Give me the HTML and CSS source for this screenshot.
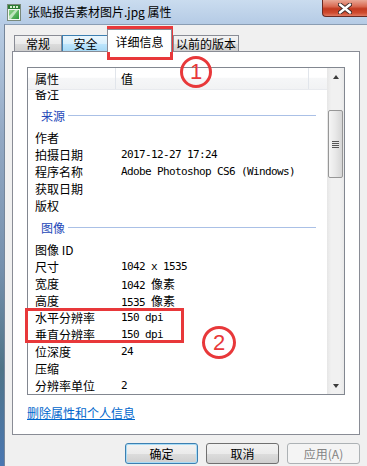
FILE: index.html
```html
<!DOCTYPE html>
<html lang="zh-CN">
<head>
  <meta charset="UTF-8">
  <title>张贴报告素材图片.jpg 属性</title>
  <link rel="stylesheet" href="styles.css">
</head>
<body>
  <div class="window">
    <header class="titlebar">
      <svg class="title-icon" width="14" height="17" viewBox="0 0 14 17">
        <defs>
          <linearGradient id="pic" x1="0" y1="0" x2="1" y2="1">
            <stop offset="0" stop-color="#8fd48a"/>
            <stop offset="1" stop-color="#2f9a3c"/>
          </linearGradient>
        </defs>
        <rect x="0.5" y="0.5" width="13" height="16" fill="#f4f8f4" stroke="#7a8a7c"/>
        <rect x="1" y="1" width="12" height="4" fill="#2d7d35"/>
        <rect x="3" y="2" width="2" height="2" fill="#d8f0d0"/>
        <rect x="6" y="2" width="2" height="2" fill="#d8f0d0"/>
        <rect x="9" y="2" width="2" height="2" fill="#d8f0d0"/>
        <rect x="2" y="6" width="10" height="9" fill="url(#pic)"/>
        <path d="M2 12 L8 6 L11 6 L4 15 L2 15 Z" fill="#e6f6e2" opacity="0.7"/>
      </svg>
      <span class="title">张贴报告素材图片.jpg 属性</span>
      <div class="close-btn">
        <svg width="14" height="11" viewBox="0 0 14 11">
          <path d="M2 1.5 L12 9.5 M12 1.5 L2 9.5" stroke="#3b2a28" stroke-width="4.2" stroke-linecap="round"/>
          <path d="M2 1.5 L12 9.5 M12 1.5 L2 9.5" stroke="#ffffff" stroke-width="2.4" stroke-linecap="round"/>
        </svg>
      </div>
    </header>

    <div class="frame-body">
      <div class="frame-left"></div>
      <div class="client">
        <nav class="tabs">
          <div class="tab tab-general">常规</div>
          <div class="tab tab-security hot">安全</div>
          <div class="tab tab-details active">详细信息</div>
          <div class="tab tab-versions">以前的版本</div>
        </nav>

        <section class="panel">
          <div class="list">
            <div class="list-main">
              <div class="list-head">
                <div class="head-cell col-name">属性</div>
                <div class="head-cell col-value">值</div>
                <div class="head-cell col-rest"></div>
              </div>
              <div class="list-body">
                <div class="rows">
                  <div class="row"><span class="name">备注</span><span class="value"></span></div>
                  <div class="group">来源</div>
                  <div class="row"><span class="name">作者</span><span class="value"></span></div>
                  <div class="row"><span class="name">拍摄日期</span><span class="value">2017-12-27 17:24</span></div>
                  <div class="row"><span class="name">程序名称</span><span class="value">Adobe Photoshop CS6 (Windows)</span></div>
                  <div class="row"><span class="name">获取日期</span><span class="value"></span></div>
                  <div class="row"><span class="name">版权</span><span class="value"></span></div>
                  <div class="group">图像</div>
                  <div class="row"><span class="name">图像 ID</span><span class="value"></span></div>
                  <div class="row"><span class="name">尺寸</span><span class="value">1042 x 1535</span></div>
                  <div class="row"><span class="name">宽度</span><span class="value">1042 <span class="unit">像素</span></span></div>
                  <div class="row"><span class="name">高度</span><span class="value">1535 <span class="unit">像素</span></span></div>
                  <div class="row"><span class="name">水平分辨率</span><span class="value">150 dpi</span></div>
                  <div class="row"><span class="name">垂直分辨率</span><span class="value">150 dpi</span></div>
                  <div class="row"><span class="name">位深度</span><span class="value">24</span></div>
                  <div class="row"><span class="name">压缩</span><span class="value"></span></div>
                  <div class="row"><span class="name">分辨率单位</span><span class="value">2</span></div>
                </div>
              </div>
            </div>
            <div class="scrollbar">
              <div class="sb-btn"><span class="arrow-up"></span></div>
              <div class="sb-track">
                <div class="sb-thumb">
                  <span class="grip"></span>
                </div>
              </div>
              <div class="sb-btn"><span class="arrow-down"></span></div>
            </div>
          </div>
          <a class="remove-link" href="#">删除属性和个人信息</a>
        </section>

        <div class="buttons">
          <button class="btn default">确定</button>
          <button class="btn">取消</button>
          <button class="btn" disabled>应用(A)</button>
        </div>
      </div>
    </div>

    <!-- annotations drawn over the dialog -->
    <div class="mark-box box-tab"></div>
    <div class="mark-circle circle-1">1</div>
    <div class="mark-box box-dpi"></div>
    <div class="mark-circle circle-2">2</div>
  </div>
</body>
</html>
```

FILE: styles.css
```css
body, html {
  margin: 0;
  padding: 0;
  font-family: "Noto Sans CJK SC", sans-serif;
  font-size: 12px;
  color: #000;
  background: #f0f0f0;
}
.window {
  position: relative;
  width: 367px;
  height: 466px;
  overflow: hidden;
  display: flex;
  flex-direction: column;
}

/* title bar */
.titlebar {
  height: 24px;
  flex: none;
  display: flex;
  align-items: center;
  background: linear-gradient(#cadcef, #b5cbe5);
}
.title-icon {
  margin-left: 7px;
  flex: none;
}
.title {
  margin-left: 7px;
  flex: 1;
  line-height: 16px;
  color: #000;
}
.close-btn {
  align-self: flex-start;
  width: 45px;
  height: 17px;
  box-sizing: border-box;
  border: 1px solid #6a2a22;
  border-top: none;
  border-right: none;
  border-radius: 0 0 0 4px;
  background: linear-gradient(#e9a896 0%, #d96a52 40%, #c23a20 55%, #cf4a2e 80%, #e07a62 100%);
  display: flex;
  align-items: center;
  justify-content: center;
}

.frame-body {
  flex: 1;
  display: flex;
}
.frame-left {
  width: 4px;
  flex: none;
  background: linear-gradient(#b9cde4 0%, #93a9c4 25%, #7590ad 55%, #4f7488 78%, #4a77b2 100%);
}
.client {
  flex: 1;
  border-left: 1px solid #75869b;
  border-top: 1px solid #8a9db3;
  background: #f0f0f0;
  padding: 0 7px;
}

/* tabs */
.tabs {
  display: flex;
  align-items: flex-end;
  height: 26px;
  box-sizing: border-box;
  padding-left: 2px;
}
.tab {
  height: 16px;
  box-sizing: border-box;
  border: 1px solid #898c95;
  border-bottom: none;
  line-height: 15px;
  text-align: center;
  background: linear-gradient(#f3f3f3 0%, #ebebeb 50%, #dddddd 51%, #cfcfcf 100%);
}
.tab.hot {
  border-color: #3c7fb1;
  background: linear-gradient(#eaf6fd 0%, #d9f0fc 50%, #bee6fd 51%, #a7d9f5 100%);
}
.tab-general { width: 48px; }
.tab-security { width: 47px; }
.tab-details {
  width: 65px;
  margin-left: -2px;
}
.tab-versions {
  width: 66px;
  margin-left: 1px;
}
.tab.active {
  position: relative;
  z-index: 1;
  height: 23px;
  margin-bottom: -1px;
  background: #fff;
  line-height: 24px;
}

/* tab page */
.panel {
  width: 348px;
  height: 384px;
  box-sizing: border-box;
  border: 1px solid #898c95;
  background: #fff;
  padding: 15px 14px 13px;
}
.list {
  height: 328px;
  box-sizing: border-box;
  border: 1px solid #828790;
  display: flex;
}
.list-main {
  flex: 1;
  display: flex;
  flex-direction: column;
  min-width: 0;
}
.list-head {
  height: 22px;
  flex: none;
  display: flex;
  box-sizing: border-box;
  border-bottom: 1px solid #e8eaee;
  background: linear-gradient(#ffffff 0%, #ffffff 45%, #f6f7f8 46%, #f1f2f4 100%);
}
.head-cell {
  line-height: 21px;
  border-right: 1px solid #e1e5eb;
  box-sizing: border-box;
}
.col-name {
  width: 88px;
  padding-left: 7px;
}
.col-value {
  width: 193px;
  padding-left: 5px;
}
.col-rest {
  flex: 1;
  border-right: none;
}
.list-body {
  flex: 1;
  overflow: hidden;
}
.rows {
  margin-top: -5px;
}
.row {
  display: flex;
  height: 17px;
  line-height: 17px;
  white-space: nowrap;
}
.row .name {
  width: 88px;
  flex: none;
  padding-left: 7px;
  box-sizing: border-box;
}
.row .value {
  padding-left: 5px;
  font-family: "DejaVu Sans Mono", "Noto Sans CJK SC", monospace;
  font-size: 11px;
  letter-spacing: -0.62px;
}
.row .unit {
  font-family: "Noto Sans CJK SC", sans-serif;
  font-size: 12px;
  letter-spacing: 0;
}
.group {
  height: 27px;
  display: flex;
  align-items: center;
  padding-left: 13px;
  color: #2448b8;
}
.group::after {
  content: "";
  flex: 1;
  height: 1px;
  margin: 0 11px 0 3px;
  background: #aac0e6;
}

/* scrollbar */
.scrollbar {
  width: 17px;
  flex: none;
  display: flex;
  flex-direction: column;
  background: linear-gradient(to right, #e6e6e6, #f1f1f1 25%, #f1f1f1 75%, #e9e9e9);
}
.sb-btn {
  height: 17px;
  flex: none;
  display: flex;
  align-items: center;
  justify-content: center;
}
.arrow-up {
  width: 0;
  height: 0;
  border-left: 3.5px solid transparent;
  border-right: 3.5px solid transparent;
  border-bottom: 4px solid #3c3c3c;
}
.arrow-down {
  width: 0;
  height: 0;
  border-left: 3.5px solid transparent;
  border-right: 3.5px solid transparent;
  border-top: 4px solid #3c3c3c;
}
.sb-track {
  flex: 1;
}
.sb-thumb {
  margin: 25px 0 0 1px;
  width: 15px;
  height: 68px;
  box-sizing: border-box;
  border: 1px solid #979797;
  border-radius: 2px;
  background: linear-gradient(to right, #f5f5f5, #e8e8e8 50%, #d6d6d6);
  display: flex;
  align-items: center;
  justify-content: center;
}
.grip {
  width: 7px;
  height: 7px;
  background: repeating-linear-gradient(#555 0, #555 1px, #e8e8e8 1px, #e8e8e8 2px);
}

.remove-link {
  display: inline-block;
  margin-top: 10px;
  line-height: 16px;
  color: #0066cc;
  text-decoration: underline;
}

/* dialog buttons */
.buttons {
  display: flex;
  justify-content: flex-end;
  gap: 8px;
  margin-top: 8px;
}
.btn {
  width: 73px;
  height: 21px;
  padding: 0;
  border: 1px solid #707070;
  border-radius: 3px;
  background: linear-gradient(#f2f2f2 0%, #ebebeb 50%, #dddddd 51%, #cfcfcf 100%);
  font-family: "Noto Sans CJK SC", sans-serif;
  font-size: 12px;
  color: #000;
}
.btn.default {
  border-color: #3c7fb1;
  box-shadow: inset 0 0 0 1px #a9dcf6;
}
.btn:disabled {
  border-color: #adb2b5;
  background: #f4f4f4;
  color: #838383;
}

/* red annotations */
.mark-box {
  position: absolute;
  box-sizing: border-box;
  border: 3px solid #e8383a;
}
.box-tab {
  left: 107px;
  top: 26px;
  width: 66px;
  height: 34px;
}
.box-dpi {
  left: 25px;
  top: 308px;
  width: 159px;
  height: 35px;
}
.mark-circle {
  position: absolute;
  box-sizing: border-box;
  border: 3px solid #e8383a;
  border-radius: 50%;
  color: #e8383a;
  font-family: "Liberation Sans", sans-serif;
  font-size: 22px;
  display: flex;
  align-items: center;
  justify-content: center;
}
.circle-1 {
  left: 180px;
  top: 56px;
  width: 32px;
  height: 32px;
}
.circle-2 {
  left: 202px;
  top: 326px;
  width: 34px;
  height: 33px;
}
```
